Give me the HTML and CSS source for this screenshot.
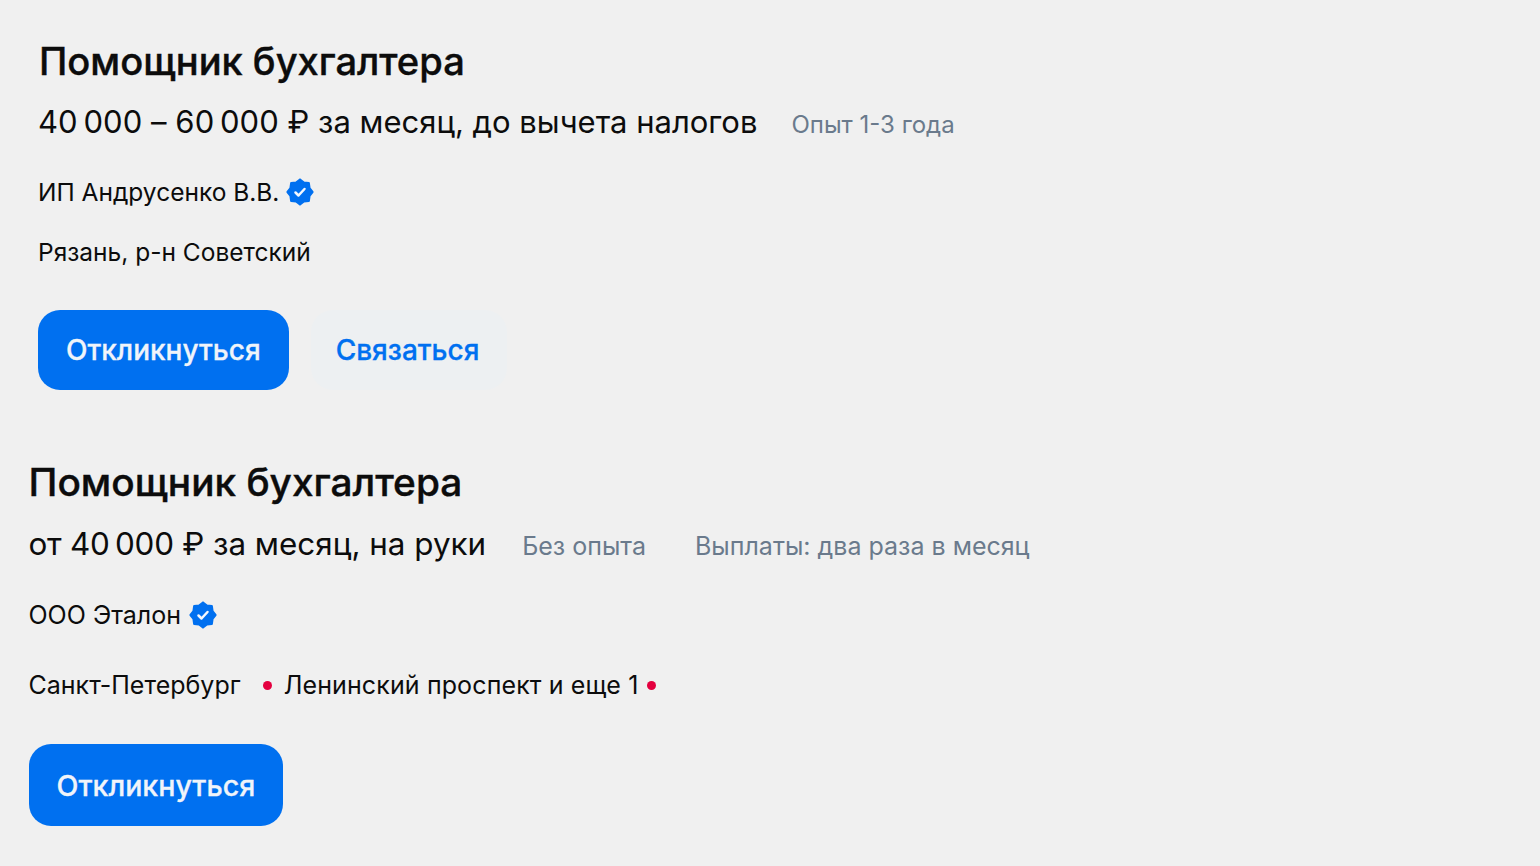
FILE: index.html
```html
<!DOCTYPE html>
<html lang="ru">
<head>
  <meta charset="UTF-8">
  <meta name="viewport" content="width=device-width, initial-scale=1.0">
  <title>Вакансии</title>
  <link rel="stylesheet" href="styles.css">
</head>
<body>
  <svg class="sprite" width="0" height="0" aria-hidden="true">
    <symbol id="verified" viewBox="0 0 28 28">
      <polygon fill="#0070f0" stroke="#0070f0" stroke-width="2.200" stroke-linejoin="round" points="14,1.500 17.900,4.500 22.800,5.200 23.500,10.100 26.500,14 23.500,17.900 22.800,22.800 17.900,23.500 14,26.500 10.100,23.500 5.200,22.800 4.500,17.900 1.500,14 4.500,10.100 5.200,5.200 10.100,4.500"/>
      <path fill="none" stroke="#f4f8fe" stroke-width="2.500" stroke-linecap="round" stroke-linejoin="round" d="M9.500 14.500l3 3 6-6.500"/>
    </symbol>
  </svg>

  <section class="vacancy vacancy-first">
    <h2 class="title">Помощник бухгалтера</h2>
    <div class="terms">
      <span class="salary"><span class="amount">40&thinsp;000 – 60&thinsp;000 ₽</span> за месяц, до вычета налогов</span>
      <span class="note">Опыт 1-3 года</span>
    </div>
    <div class="company">ИП Андрусенко В.В. <svg class="badge"><use href="#verified"/></svg></div>
    <div class="place">Рязань, р-н Советский</div>
    <div class="actions">
      <button class="btn btn-primary">Откликнуться</button>
      <button class="btn btn-light">Связаться</button>
    </div>
  </section>

  <section class="vacancy vacancy-second">
    <h2 class="title">Помощник бухгалтера</h2>
    <div class="terms">
      <span class="salary"><span class="amount">от 40&thinsp;000 ₽</span> за месяц, на руки</span>
      <span class="note">Без опыта</span>
      <span class="note">Выплаты: два раза в месяц</span>
    </div>
    <div class="company">ООО Эталон <svg class="badge"><use href="#verified"/></svg></div>
    <div class="place">
      <span>Санкт-Петербург</span>
      <i class="dot dot-wide"></i>
      <span class="street">Ленинский проспект и еще 1</span>
      <i class="dot"></i>
    </div>
    <div class="actions">
      <button class="btn btn-primary">Откликнуться</button>
    </div>
  </section>
</body>
</html>
```

FILE: styles.css
```css
* { margin: 0; padding: 0; box-sizing: border-box; }
body {
  font-family: Inter, "Noto Sans", sans-serif;
  background: #f0f0f0;
  color: #0c0c0c;
  height: 866px;
  overflow: hidden;
}
.sprite { display: block; }
.vacancy-first { padding: 39px 0 0 38px; }
.vacancy-second { padding: 70px 0 0 28.500px; }
.title {
  font-size: 38.100px;
  line-height: 44px;
  font-weight: 500;
  -webkit-text-stroke: .4px currentColor;
}
.vacancy-first .title { padding-left: 1px; }
.vacancy-second .title { font-size: 38.800px; }
.terms {
  display: flex;
  align-items: baseline;
  gap: 34px;
  margin-top: 17px;
}
.vacancy-first .amount { letter-spacing: .06px; }
.vacancy-second .terms { gap: 36px; margin-top: 18px; }
.vacancy-second .note { font-size: 25px; }
.vacancy-second .note + .note { margin-left: 13px; }
.salary { font-size: 31px; line-height: 44px; }
.vacancy-second .salary { font-size: 31.400px; }
.vacancy-second .amount { letter-spacing: -.25px; }
.note { font-size: 24px; color: #6a7a8c; }
.company, .place {
  display: flex;
  align-items: center;
  font-size: 24.500px;
  line-height: 32px;
}
.vacancy-second .company, .vacancy-second .place { font-size: 25px; }
.street { letter-spacing: .12px; }
.company { gap: 7px; margin-top: 32px; }
.place { margin-top: 28px; }
.vacancy-second .company { gap: 8px; margin-top: 33px; }
.vacancy-second .place { margin-top: 38px; }
.badge { width: 28px; height: 28px; }
.dot {
  width: 9px;
  height: 9px;
  border-radius: 50%;
  background: #e4003f;
  margin-left: 8px;
}
.dot-wide { margin: 0 12px 0 22px; }
.street + .dot { margin-left: 9px; }
.actions {
  display: flex;
  gap: 22px;
  margin-top: 42px;
}
.vacancy-second .actions { margin-top: 43px; }
.btn {
  height: 80px;
  padding: 0 28px;
  border: none;
  border-radius: 22px;
  font-family: inherit;
  font-size: 28px;
  font-weight: 500;
  -webkit-text-stroke: .3px currentColor;
  cursor: pointer;
}
.vacancy-second .btn { height: 82px; font-size: 28.600px; }
.btn-primary { background: #0070f0; color: #f0f4fa; }
.btn-light { background: #edf0f2; color: #0070f0; padding: 0 28px 0 25px; }
```
